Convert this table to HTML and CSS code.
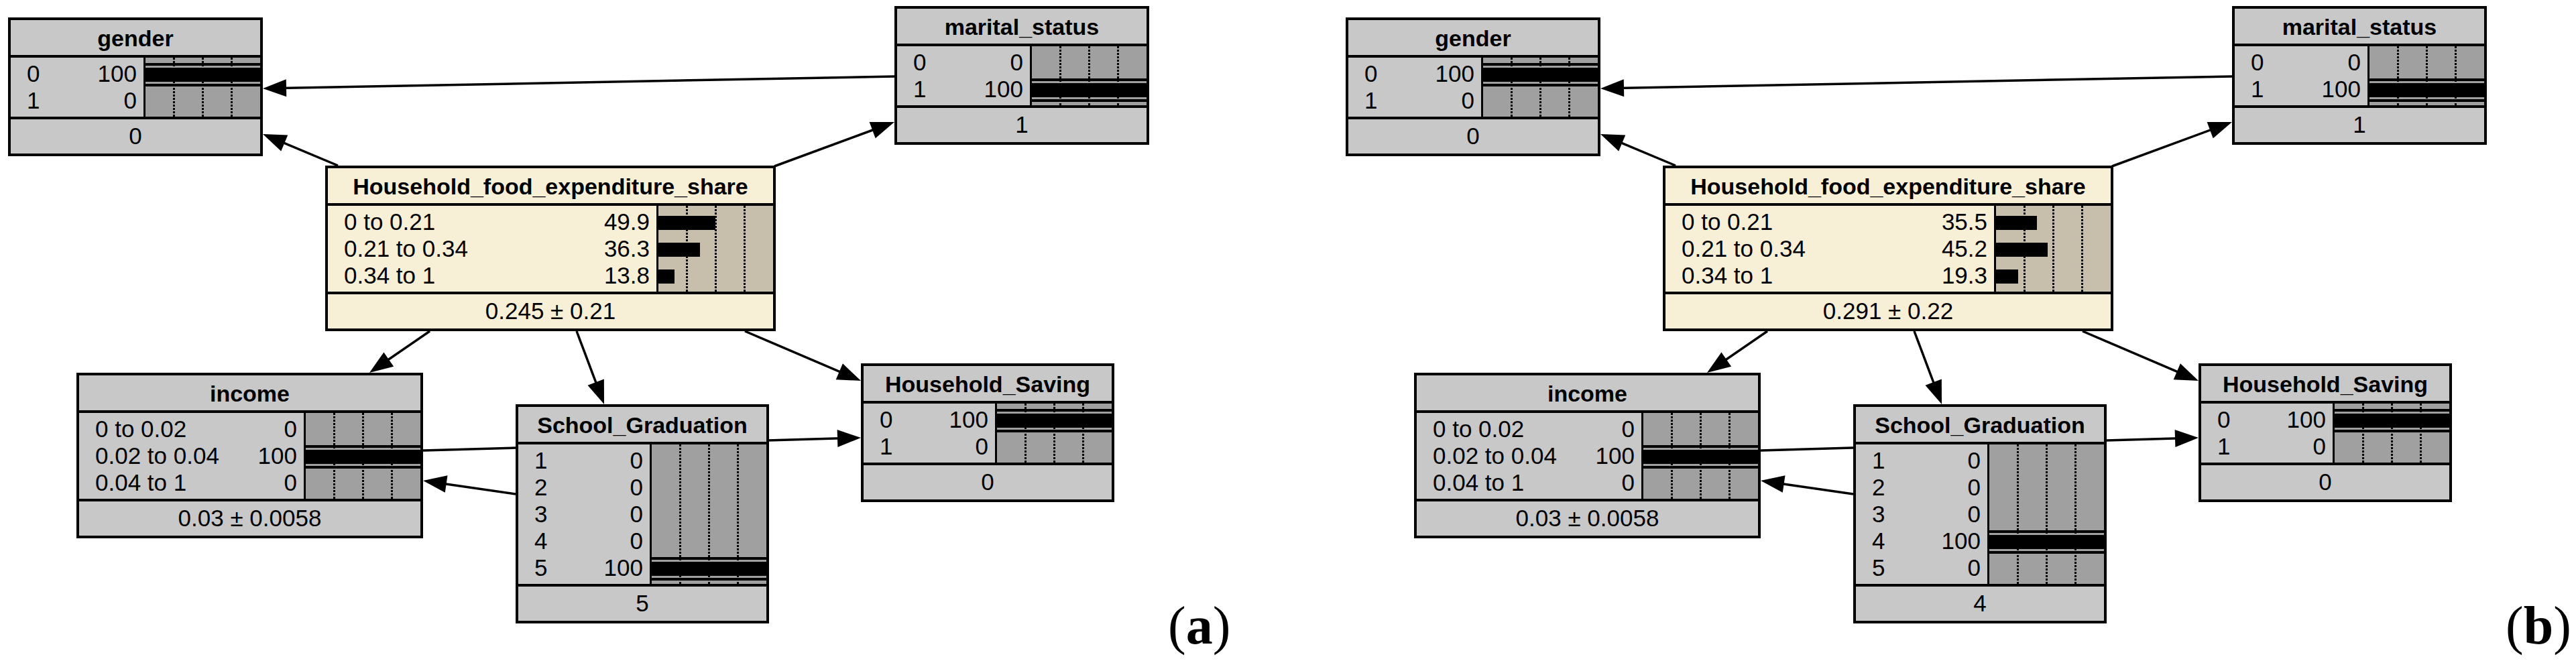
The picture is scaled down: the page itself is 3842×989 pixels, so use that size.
FILE: index.html
```html
<!DOCTYPE html>
<html>
<head>
<meta charset="utf-8">
<link rel="stylesheet" href="styles.css">
</head>
<body>
<div class="page">

<div class="panel pa">
  <svg class="edges" width="1995" height="989" viewBox="0 0 1995 989">
    <defs>
      <marker id="ah-a" markerUnits="userSpaceOnUse" markerWidth="36" markerHeight="27" refX="25" refY="13" orient="auto" overflow="visible"><path d="M0,0 L35,13 L0,26 Z" fill="#000"/></marker>
    </defs>
    <g stroke="#000" stroke-width="3.5" marker-end="url(#ah-a)">
      <line x1="1334" y1="114" x2="402" y2="131.8"/>
      <line x1="504" y1="247" x2="401.2" y2="203.9"/>
      <line x1="1155" y1="248" x2="1324.6" y2="185.5"/>
      <line x1="641" y1="494" x2="559.2" y2="550.3"/>
      <line x1="860" y1="494" x2="897.5" y2="593.6"/>
      <line x1="1111" y1="494" x2="1274.8" y2="564.1"/>
      <line x1="631" y1="672" x2="1274" y2="653.3"/>
      <line x1="769" y1="737" x2="640.9" y2="718.4"/>
    </g>
  </svg>

  <div class="node n-gender">
    <div class="title">gender</div>
    <div class="table">
      <div class="labels">
        <div class="row"><span>0</span><span>100</span></div>
        <div class="row"><span>1</span><span>0</span></div>
      </div>
      <div class="bars">
        <i class="grid g1"></i><i class="grid g2"></i><i class="grid g3"></i>
        <div class="brow find"><b class="bar" style="width:100%"></b></div>
        <div class="brow"></div>
      </div>
    </div>
    <div class="foot">0</div>
  </div>

  <div class="node n-marital">
    <div class="title">marital_status</div>
    <div class="table">
      <div class="labels">
        <div class="row"><span>0</span><span>0</span></div>
        <div class="row"><span>1</span><span>100</span></div>
      </div>
      <div class="bars">
        <i class="grid g1"></i><i class="grid g2"></i><i class="grid g3"></i>
        <div class="brow"></div>
        <div class="brow find"><b class="bar" style="width:100%"></b></div>
      </div>
    </div>
    <div class="foot">1</div>
  </div>

  <div class="node cream n-hfes">
    <div class="title">Household_food_expenditure_share</div>
    <div class="table">
      <div class="labels">
        <div class="row"><span>0 to 0.21</span><span>49.9</span></div>
        <div class="row"><span>0.21 to 0.34</span><span>36.3</span></div>
        <div class="row"><span>0.34 to 1</span><span>13.8</span></div>
      </div>
      <div class="bars">
        <i class="grid g1"></i><i class="grid g2"></i><i class="grid g3"></i>
        <div class="brow"><b class="bar" style="width:49.9%"></b></div>
        <div class="brow"><b class="bar" style="width:36.3%"></b></div>
        <div class="brow"><b class="bar" style="width:13.8%"></b></div>
      </div>
    </div>
    <div class="foot">0.245 ± 0.21</div>
  </div>

  <div class="node n-income">
    <div class="title">income</div>
    <div class="table">
      <div class="labels">
        <div class="row"><span>0 to 0.02</span><span>0</span></div>
        <div class="row"><span>0.02 to 0.04</span><span>100</span></div>
        <div class="row"><span>0.04 to 1</span><span>0</span></div>
      </div>
      <div class="bars">
        <i class="grid g1"></i><i class="grid g2"></i><i class="grid g3"></i>
        <div class="brow"></div>
        <div class="brow find"><b class="bar" style="width:100%"></b></div>
        <div class="brow"></div>
      </div>
    </div>
    <div class="foot">0.03 ± 0.0058</div>
  </div>

  <div class="node n-school">
    <div class="title">School_Graduation</div>
    <div class="table">
      <div class="labels">
        <div class="row"><span>1</span><span>0</span></div>
        <div class="row"><span>2</span><span>0</span></div>
        <div class="row"><span>3</span><span>0</span></div>
        <div class="row"><span>4</span><span>0</span></div>
        <div class="row"><span>5</span><span>100</span></div>
      </div>
      <div class="bars">
        <i class="grid g1"></i><i class="grid g2"></i><i class="grid g3"></i>
        <div class="brow"></div>
        <div class="brow"></div>
        <div class="brow"></div>
        <div class="brow"></div>
        <div class="brow find"><b class="bar" style="width:100%"></b></div>
      </div>
    </div>
    <div class="foot">5</div>
  </div>

  <div class="node n-saving">
    <div class="title">Household_Saving</div>
    <div class="table">
      <div class="labels">
        <div class="row"><span>0</span><span>100</span></div>
        <div class="row"><span>1</span><span>0</span></div>
      </div>
      <div class="bars">
        <i class="grid g1"></i><i class="grid g2"></i><i class="grid g3"></i>
        <div class="brow find"><b class="bar" style="width:100%"></b></div>
        <div class="brow"></div>
      </div>
    </div>
    <div class="foot">0</div>
  </div>

  <div class="plabel">(<b>a</b>)</div>
</div>

<div class="panel pb">
  <svg class="edges" width="1847" height="989" viewBox="0 0 1847 989">
    <defs>
      <marker id="ah-b" markerUnits="userSpaceOnUse" markerWidth="36" markerHeight="27" refX="25" refY="13" orient="auto" overflow="visible"><path d="M0,0 L35,13 L0,26 Z" fill="#000"/></marker>
    </defs>
    <g stroke="#000" stroke-width="3.5" marker-end="url(#ah-b)">
      <line x1="1334" y1="114" x2="402" y2="131.8"/>
      <line x1="504" y1="247" x2="401.2" y2="203.9"/>
      <line x1="1155" y1="248" x2="1324.6" y2="185.5"/>
      <line x1="641" y1="494" x2="559.2" y2="550.3"/>
      <line x1="860" y1="494" x2="897.5" y2="593.6"/>
      <line x1="1111" y1="494" x2="1274.8" y2="564.1"/>
      <line x1="631" y1="672" x2="1274" y2="653.3"/>
      <line x1="769" y1="737" x2="640.9" y2="718.4"/>
    </g>
  </svg>

  <div class="node n-gender">
    <div class="title">gender</div>
    <div class="table">
      <div class="labels">
        <div class="row"><span>0</span><span>100</span></div>
        <div class="row"><span>1</span><span>0</span></div>
      </div>
      <div class="bars">
        <i class="grid g1"></i><i class="grid g2"></i><i class="grid g3"></i>
        <div class="brow find"><b class="bar" style="width:100%"></b></div>
        <div class="brow"></div>
      </div>
    </div>
    <div class="foot">0</div>
  </div>

  <div class="node n-marital">
    <div class="title">marital_status</div>
    <div class="table">
      <div class="labels">
        <div class="row"><span>0</span><span>0</span></div>
        <div class="row"><span>1</span><span>100</span></div>
      </div>
      <div class="bars">
        <i class="grid g1"></i><i class="grid g2"></i><i class="grid g3"></i>
        <div class="brow"></div>
        <div class="brow find"><b class="bar" style="width:100%"></b></div>
      </div>
    </div>
    <div class="foot">1</div>
  </div>

  <div class="node cream n-hfes">
    <div class="title">Household_food_expenditure_share</div>
    <div class="table">
      <div class="labels">
        <div class="row"><span>0 to 0.21</span><span>35.5</span></div>
        <div class="row"><span>0.21 to 0.34</span><span>45.2</span></div>
        <div class="row"><span>0.34 to 1</span><span>19.3</span></div>
      </div>
      <div class="bars">
        <i class="grid g1"></i><i class="grid g2"></i><i class="grid g3"></i>
        <div class="brow"><b class="bar" style="width:35.5%"></b></div>
        <div class="brow"><b class="bar" style="width:45.2%"></b></div>
        <div class="brow"><b class="bar" style="width:19.3%"></b></div>
      </div>
    </div>
    <div class="foot">0.291 ± 0.22</div>
  </div>

  <div class="node n-income">
    <div class="title">income</div>
    <div class="table">
      <div class="labels">
        <div class="row"><span>0 to 0.02</span><span>0</span></div>
        <div class="row"><span>0.02 to 0.04</span><span>100</span></div>
        <div class="row"><span>0.04 to 1</span><span>0</span></div>
      </div>
      <div class="bars">
        <i class="grid g1"></i><i class="grid g2"></i><i class="grid g3"></i>
        <div class="brow"></div>
        <div class="brow find"><b class="bar" style="width:100%"></b></div>
        <div class="brow"></div>
      </div>
    </div>
    <div class="foot">0.03 ± 0.0058</div>
  </div>

  <div class="node n-school">
    <div class="title">School_Graduation</div>
    <div class="table">
      <div class="labels">
        <div class="row"><span>1</span><span>0</span></div>
        <div class="row"><span>2</span><span>0</span></div>
        <div class="row"><span>3</span><span>0</span></div>
        <div class="row"><span>4</span><span>100</span></div>
        <div class="row"><span>5</span><span>0</span></div>
      </div>
      <div class="bars">
        <i class="grid g1"></i><i class="grid g2"></i><i class="grid g3"></i>
        <div class="brow"></div>
        <div class="brow"></div>
        <div class="brow"></div>
        <div class="brow find"><b class="bar" style="width:100%"></b></div>
        <div class="brow"></div>
      </div>
    </div>
    <div class="foot">4</div>
  </div>

  <div class="node n-saving">
    <div class="title">Household_Saving</div>
    <div class="table">
      <div class="labels">
        <div class="row"><span>0</span><span>100</span></div>
        <div class="row"><span>1</span><span>0</span></div>
      </div>
      <div class="bars">
        <i class="grid g1"></i><i class="grid g2"></i><i class="grid g3"></i>
        <div class="brow find"><b class="bar" style="width:100%"></b></div>
        <div class="brow"></div>
      </div>
    </div>
    <div class="foot">0</div>
  </div>

  <div class="plabel">(<b>b</b>)</div>
</div>

</div>
</body>
</html>
```

FILE: styles.css
```css
* { box-sizing: border-box; }

html, body {
  margin: 0;
  padding: 0;
  background: #ffffff;
}

body {
  font-family: "Liberation Sans", Arial, sans-serif;
  color: #000;
}

.page {
  display: flex;
  width: 3842px;
  height: 989px;
  overflow: hidden;
  background: #ffffff;
}

.panel {
  position: relative;
  flex: 0 0 auto;
  height: 989px;
}

.pa { width: 1995px; }
.pb { width: 1847px; }

.edges {
  position: absolute;
  left: 0;
  top: 0;
  z-index: 0;
}

.node {
  position: absolute;
  z-index: 1;
  display: flex;
  flex-direction: column;
  border: 4px solid #000;
  background: #c8c8c8;
}

.node.cream { background: #f7efd6; }

.title {
  height: 56px;
  line-height: 55px;
  border-bottom: 4px solid #000;
  text-align: center;
  font-weight: bold;
  font-size: 34px;
  white-space: nowrap;
}

.table {
  display: flex;
  border-bottom: 4px solid #000;
}

.labels {
  flex: 1 1 auto;
  padding: 4px 10px 4px 24px;
}

.row {
  display: flex;
  justify-content: space-between;
  height: 40px;
  line-height: 40px;
  font-size: 35px;
  white-space: nowrap;
}

.bars {
  position: relative;
  flex: 0 0 174px;
  border-left: 3px solid #000;
  background: #a0a0a0;
  padding: 4px 0;
}

.cream .bars { background: #c7bfab; }

.grid {
  position: absolute;
  top: 0;
  bottom: 0;
  width: 3px;
  background: repeating-linear-gradient(to bottom, #000 0, #000 3px, transparent 3px, transparent 5px);
}

.g1 { left: calc(25% - 1.5px); }
.g2 { left: calc(50% - 1.5px); }
.g3 { left: calc(75% - 1.5px); }

.brow {
  position: relative;
  z-index: 1;
  height: 40px;
}

.bar {
  position: absolute;
  left: 0;
  top: 11px;
  height: 21px;
  background: #000;
}

.brow.find::before,
.brow.find::after {
  content: "";
  position: absolute;
  left: 0;
  right: 0;
  height: 4px;
  background: #000;
}

.brow.find::before { top: 4px; }
.brow.find::after { top: 35px; }

.foot {
  height: 51px;
  line-height: 50px;
  text-align: center;
  font-size: 35px;
  white-space: nowrap;
}

.n-gender  { left: 12px;   top: 26px;  width: 380px; }
.n-marital { left: 1334px; top: 9px;   width: 380px; }
.n-hfes    { left: 485px;  top: 247px; width: 672px; }
.n-income  { left: 114px;  top: 556px; width: 517px; }
.n-school  { left: 769px;  top: 603px; width: 378px; }
.n-saving  { left: 1284px; top: 542px; width: 378px; }

.plabel {
  position: absolute;
  left: 1742px;
  top: 893px;
  font-family: "Liberation Serif", "Times New Roman", serif;
  font-size: 80px;
  line-height: 80px;
  white-space: nowrap;
}

.plabel b { font-weight: bold; }
```
